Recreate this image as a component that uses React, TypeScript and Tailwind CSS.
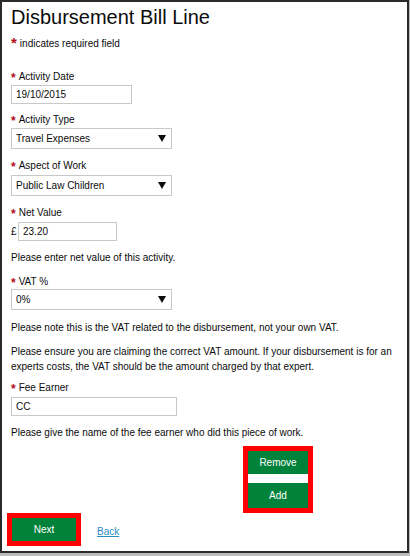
import type { ReactNode } from 'react'

const font = { fontFamily: '"Liberation Sans", Arial, sans-serif' }

function Star({ big }: { big?: boolean }) {
  return big ? (
    <span className="mr-[3px] inline-block align-top text-[15px] font-bold leading-[11px] text-[#b10e1e]">
      *
    </span>
  ) : (
    <span className="mr-[3px] inline-block translate-y-[2px] text-[12px] font-bold leading-[10px] text-[#b10e1e]">
      *
    </span>
  )
}

function Label({ children, className = '' }: { children: ReactNode; className?: string }) {
  return (
    <div className={`h-[14px] text-[10px] leading-[14px] text-[#0b0c0c] ${className}`}>
      <Star />
      {children}
    </div>
  )
}

function TextBox({ value, className = '' }: { value: string; className?: string }) {
  return (
    <div
      className={`flex h-[19px] items-center border border-[#c8c8c8] bg-white px-[4px] text-[10px] text-[#0b0c0c] ${className}`}
    >
      {value}
    </div>
  )
}

function SelectBox({ value, className = '' }: { value: string; className?: string }) {
  return (
    <div
      className={`flex h-[21px] w-[161px] items-center justify-between border border-[#c8c8c8] bg-white pl-[4px] pr-[5px] text-[10px] text-[#0b0c0c] ${className}`}
    >
      <span>{value}</span>
      <svg width="8" height="7" viewBox="0 0 8 7">
        <path d="M0 0 H8 L4 7 Z" fill="#0b0c0c" />
      </svg>
    </div>
  )
}

function Hint({ children, className = '' }: { children: ReactNode; className?: string }) {
  return (
    <p className={`text-[10px] leading-[15px] text-[#0b0c0c] ${className}`}>{children}</p>
  )
}

function GreenButton({ children, className = '' }: { children: ReactNode; className?: string }) {
  return (
    <button
      type="button"
      className={`flex items-center justify-center bg-[#00823b] text-[10px] text-white ${className}`}
    >
      {children}
    </button>
  )
}

export default function App() {
  return (
    <div className="h-[556px] w-[410px] bg-[#bdbdbd]" style={font}>
      <div className="h-[553px] w-[409px] border-2 border-[#2b2b2b] bg-white pl-[9px]">
        <h1 className="mt-[3px] text-[20px] leading-[24px] text-[#0b0c0c]">
          Disbursement Bill Line
        </h1>
        <div className="mt-[8px] h-[14px] text-[10px] leading-[14px] text-[#0b0c0c]">
          <Star big />
          indicates required field
        </div>

        <Label className="mt-[19px]">Activity Date</Label>
        <TextBox value="19/10/2015" className="mt-[1px] w-[121px]" />

        <Label className="mt-[9px]">Activity Type</Label>
        <SelectBox value="Travel Expenses" className="mt-[1px]" />

        <Label className="mt-[10px]">Aspect of Work</Label>
        <SelectBox value="Public Law Children" className="mt-[2px]" />

        <Label className="mt-[10px]">Net Value</Label>
        <div className="mt-[2px] flex items-center text-[10px] text-[#0b0c0c]">
          <span className="w-[7px]">£</span>
          <TextBox value="23.20" className="w-[99px]" />
        </div>

        <Hint className="mt-[9px]">Please enter net value of this activity.</Hint>

        <Label className="mt-[10px]">VAT %</Label>
        <SelectBox value="0%" className="mt-0" />

        <Hint className="mt-[10px]">
          Please note this is the VAT related to the disbursement, not your own VAT.
        </Hint>
        <Hint className="mt-[9px] pr-[10px]">
          Please ensure you are claiming the correct VAT amount. If your disbursement is for an
          experts costs, the VAT should be the amount charged by that expert.
        </Hint>

        <Label className="mt-[7px]">Fee Earner</Label>
        <TextBox value="CC" className="mt-[2px] w-[166px]" />

        <Hint className="mt-[9px]">Please give the name of the fee earner who did this piece of work.</Hint>

        <div className="mt-[6px] flex justify-end pr-[94px]">
          <div className="flex w-[70px] flex-col border-[5px] border-[#ff0000] bg-white">
            <GreenButton className="h-[23px] w-full">Remove</GreenButton>
            <div className="h-[9px]" />
            <GreenButton className="h-[25px] w-full">Add</GreenButton>
          </div>
        </div>

        <div className="-ml-[4px] flex items-center">
          <div className="border-[5px] border-[#ff0000]">
            <GreenButton className="h-[23px] w-[64px]">Next</GreenButton>
          </div>
          <a href="#" className="ml-[16px] mt-[3px] text-[10px] text-[#2b8cc4] underline">
            Back
          </a>
        </div>
      </div>
    </div>
  )
}
